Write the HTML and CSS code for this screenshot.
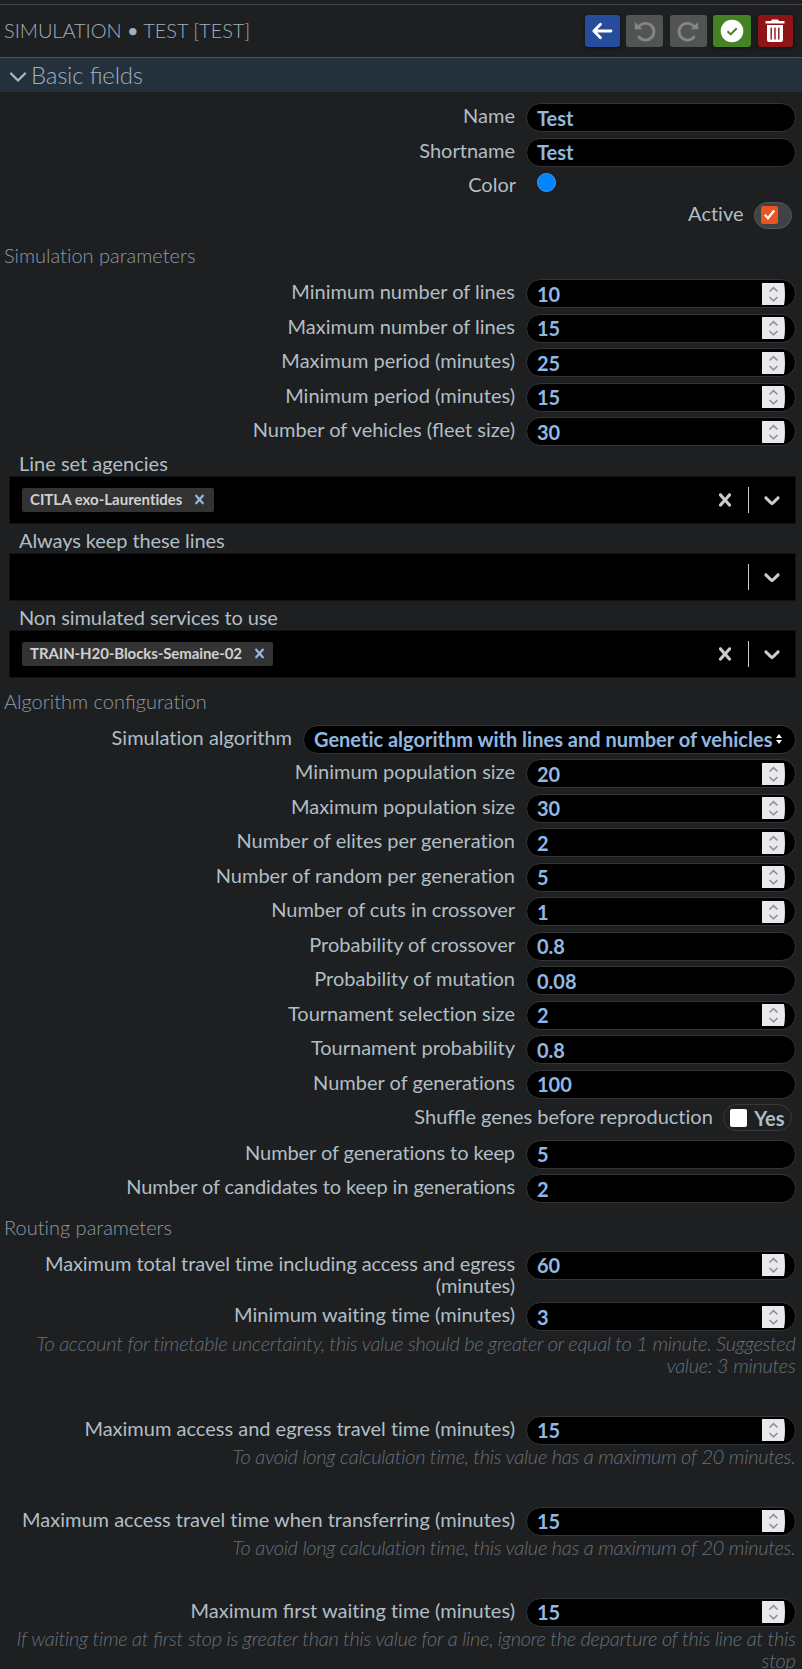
FILE: index.html
```html
<!DOCTYPE html>
<html lang="en">
<head>
<meta charset="utf-8">
<title>Simulation</title>
<link rel="stylesheet" href="styles.css">
</head>
<body>
<svg class="defs" width="0" height="0">
  <symbol id="spin" viewBox="0 0 23 22"><path class="spin-bg" d="M0 0H22Q23 5 23 11T22 22H0Z"/><path class="spin-arrow" d="M7.5 8.5 11.5 4.7 15.5 8.5M7.5 14 11.5 17.8 15.5 14"/></symbol>
  <symbol id="down" viewBox="0 0 20 20"><path d="M4.516 7.548c0.436-0.446 1.043-0.481 1.576 0l3.908 3.747 3.908-3.747c0.533-0.481 1.141-0.446 1.574 0 0.436 0.445 0.408 1.197 0 1.615-0.406 0.418-4.695 4.502-4.695 4.502-0.217 0.223-0.502 0.335-0.787 0.335s-0.57-0.112-0.789-0.335c0 0-4.287-4.084-4.695-4.502s-0.436-1.17 0-1.615z"/></symbol>
  <symbol id="cross" viewBox="0 0 20 20"><path d="M14.348 14.849c-0.469 0.469-1.229 0.469-1.697 0l-2.651-3.030-2.651 3.029c-0.469 0.469-1.229 0.469-1.697 0-0.469-0.469-0.469-1.229 0-1.697l2.758-3.15-2.759-3.152c-0.469-0.469-0.469-1.228 0-1.697s1.228-0.469 1.697 0l2.652 3.031 2.651-3.031c0.469-0.469 1.228-0.469 1.697 0s0.469 1.229 0 1.697l-2.758 3.152 2.758 3.15c0.469 0.469 0.469 1.229 0 1.698z"/></symbol>
</svg>
<header class="header">
  <h1 class="title">SIMULATION <span class="bullet">•</span> TEST [TEST]</h1>
  <div class="actions">
    <button class="btn back"><svg width="22" height="22" viewBox="0 0 22 22"><path class="line" d="M20 11H3M9.5 4.2 2.8 11l6.7 6.8"/></svg></button>
    <button class="btn off undo"><svg width="22" height="22" viewBox="0 0 22 22"><path class="line" d="M4.2 7.6A8.4 8.4 0 1 1 5 17"/><path d="M.8 2v7.2h7.6z"/></svg></button>
    <button class="btn off redo"><svg width="22" height="22" viewBox="0 0 22 22"><path class="line" d="M17.8 7.6A8.4 8.4 0 1 0 17 17"/><path d="M21.2 2v7.2h-7.6z"/></svg></button>
    <button class="btn save"><svg width="24" height="24" viewBox="0 0 24 24"><circle cx="12" cy="12" r="11.3"/><path class="tick" d="M7.5 12.2l3.2 3.2 6-6.2"/></svg></button>
    <button class="btn del"><svg width="20" height="24" viewBox="0 0 20 24"><path d="M6 2 7 .5h6L14 2h5.5v2.5H.5V2zM2 6h16v15a2 2 0 0 1-2 2H4a2 2 0 0 1-2-2z"/><path class="slots" d="M6.2 8.5v12M10 8.5v12M13.8 8.5v12"/></svg></button>
  </div>
</header>
<h2 class="section"><svg width="18" height="12" viewBox="0 0 18 12"><path d="M2 2.5 9 9.5l7-7"/></svg>Basic fields</h2>
<main class="form">
  <div class="row"><label>Name</label><div class="field">Test</div></div>
  <div class="row"><label>Shortname</label><div class="field">Test</div></div>
  <div class="row color-row"><label>Color</label><div class="color-cell"><span class="dot"></span></div></div>
  <div class="row active-row"><label>Active</label><div class="pill on"><span class="box"><svg width="17" height="17" viewBox="0 0 17 17"><path d="M3.8 8.8l3.2 3.4 6.2-7.6"/></svg></span></div></div>

  <h3 class="h-sim">Simulation parameters</h3>
  <div class="row"><label>Minimum number of lines</label><div class="field">10<svg class="spin"><use href="#spin"/></svg></div></div>
  <div class="row"><label>Maximum number of lines</label><div class="field">15<svg class="spin"><use href="#spin"/></svg></div></div>
  <div class="row"><label>Maximum period (minutes)</label><div class="field">25<svg class="spin"><use href="#spin"/></svg></div></div>
  <div class="row"><label>Minimum period (minutes)</label><div class="field">15<svg class="spin"><use href="#spin"/></svg></div></div>
  <div class="row"><label>Number of vehicles (<span class="lig">fl</span>eet size)</label><div class="field">30<svg class="spin"><use href="#spin"/></svg></div></div>

  <div class="multi"><label>Line set agencies</label>
    <div class="select"><span class="tag">CITLA exo-Laurentides<svg width="19" height="19"><use href="#cross"/></svg></span><svg class="clear" width="26" height="26"><use href="#cross"/></svg><span class="bar"></span><svg class="open" width="26" height="26"><use href="#down"/></svg></div></div>
  <div class="multi"><label class="tight">Always keep these lines</label>
    <div class="select"><span class="bar"></span><svg class="open" width="26" height="26"><use href="#down"/></svg></div></div>
  <div class="multi"><label class="tight">Non simulated services to use</label>
    <div class="select"><span class="tag tight">TRAIN-H20-Blocks-Semaine-02<svg width="19" height="19"><use href="#cross"/></svg></span><svg class="clear" width="26" height="26"><use href="#cross"/></svg><span class="bar"></span><svg class="open" width="26" height="26"><use href="#down"/></svg></div></div>

  <h3 class="h-algo">Algorithm con<span class="lig">fi</span>guration</h3>
  <div class="row"><label>Simulation algorithm</label><div class="field wide">Genetic algorithm with lines and number of vehicles<svg class="sort" width="6" height="10" viewBox="0 0 6 10"><path d="M0 4 3 0l3 4zM0 6h6L3 10z"/></svg></div></div>
  <div class="row"><label>Minimum population size</label><div class="field">20<svg class="spin"><use href="#spin"/></svg></div></div>
  <div class="row"><label>Maximum population size</label><div class="field">30<svg class="spin"><use href="#spin"/></svg></div></div>
  <div class="row"><label>Number of elites per generation</label><div class="field">2<svg class="spin"><use href="#spin"/></svg></div></div>
  <div class="row"><label>Number of random per generation</label><div class="field">5<svg class="spin"><use href="#spin"/></svg></div></div>
  <div class="row"><label class="tight">Number of cuts in crossover</label><div class="field">1<svg class="spin"><use href="#spin"/></svg></div></div>
  <div class="row"><label>Probability of crossover</label><div class="field">0.8</div></div>
  <div class="row"><label>Probability of mutation</label><div class="field">0.08</div></div>
  <div class="row"><label>Tournament selection size</label><div class="field">2<svg class="spin"><use href="#spin"/></svg></div></div>
  <div class="row"><label>Tournament probability</label><div class="field">0.8</div></div>
  <div class="row"><label>Number of generations</label><div class="field">100</div></div>
  <div class="row shuffle-row"><label>Shu<span class="lig">ffl</span>e genes before reproduction</label><div class="pill"><span class="box"></span>Yes</div></div>
  <div class="row"><label class="tight">Number of generations to keep</label><div class="field">5</div></div>
  <div class="row"><label class="tight">Number of candidates to keep in generations</label><div class="field">2</div></div>

  <h3 class="h-route">Routing parameters</h3>
  <div class="row two-line"><label class="tight">Maximum total travel time including access and egress (minutes)</label><div class="field">60<svg class="spin"><use href="#spin"/></svg></div></div>
  <div class="row"><label>Minimum waiting time (minutes)</label><div class="field">3<svg class="spin"><use href="#spin"/></svg></div></div>
  <p class="hint">To account for timetable uncertainty, this value should be greater or equal to 1 minute. Suggested value: 3 minutes</p>
  <div class="row"><label>Maximum access and egress travel time (minutes)</label><div class="field">15<svg class="spin"><use href="#spin"/></svg></div></div>
  <p class="hint">To avoid long calculation time, this value has a maximum of 20 minutes.</p>
  <div class="row"><label>Maximum access travel time when transferring (minutes)</label><div class="field">15<svg class="spin"><use href="#spin"/></svg></div></div>
  <p class="hint">To avoid long calculation time, this value has a maximum of 20 minutes.</p>
  <div class="row"><label>Maximum <span class="lig">fi</span>rst waiting time (minutes)</label><div class="field">15<svg class="spin"><use href="#spin"/></svg></div></div>
  <p class="hint">If waiting time at <span class="lig">fi</span>rst stop is greater than this value for a line, ignore the departure of this line at this stop</p>
</main>
</body>
</html>
```
FILE: styles.css
```css
* { box-sizing: border-box; }
html { background: #1e1f21; }
body {
  margin: 0;
  padding-top: 4px;
  height: 1669px;
  overflow: hidden;
  background: #1e1f21;
  color: #b0bec5;
  font: 400 20px/22px Lato, sans-serif;
  font-feature-settings: "liga" 0;
}
.defs { position: absolute; }
.lig { font-feature-settings: "liga" 1; }
h1, h2, h3, p { margin: 0; }

.header {
  display: flex;
  align-items: center;
  justify-content: space-between;
  height: 54px;
  padding: 0 9.5px 0 4px;
  border-top: 1px solid #444547;
  border-bottom: 1px solid #505153;
}
.title { padding-bottom: 2px; font-size: 20px; font-weight: 300; letter-spacing: -.06px; color: #9db1bf; }
.bullet { font-weight: 400; }
.actions { display: flex; gap: 6.4px; }
.btn {
  display: flex;
  align-items: center;
  justify-content: center;
  width: 35px;
  height: 32px;
  padding: 0;
  border: 0;
  border-radius: 3px;
  box-shadow: 0 1px 4px rgba(0, 0, 0, .5);
}
.btn svg { fill: #fff; }
.btn .line { fill: none; stroke: #fff; stroke-width: 2.8; stroke-linecap: round; stroke-linejoin: round; }
.back { background: #264c9c; }
.off { width: 37px; background: #525454; box-shadow: none; }
.off svg { fill: #858686; }
.off .line { stroke: #858686; }
.save { width: 38px; background: #448224; }
.save .tick { fill: none; stroke: #448224; stroke-width: 2; }
.del { background: #8f1418; }
.btn .slots { stroke: #8f1418; stroke-width: 1.4; }

.section {
  display: flex;
  align-items: center;
  gap: 4px;
  height: 34px;
  padding-left: 9px;
  background: #24303b;
  color: #9db1bf;
  font-size: 24px;
  font-weight: 300;
  letter-spacing: -.22px;
  font-feature-settings: "liga" 1;
}
.section svg { margin-top: 4px; fill: none; stroke: #a6bccb; stroke-width: 2.2; stroke-linecap: round; }

.form { padding: 11px 6.5px 0 4px; }
.row {
  display: flex;
  justify-content: flex-end;
  align-items: flex-start;
  gap: 11px;
  height: 34.5px;
}
.row label { padding-top: 1px; text-align: right; }
.tight { letter-spacing: -.09px; }
.field {
  display: flex;
  align-items: center;
  justify-content: space-between;
  flex: none;
  width: 269.5px;
  height: 29px;
  padding: 0 10px;
  border: 1px solid #343536;
  border-radius: 15px;
  background: #000;
  color: #90b8e0;
  font-weight: 700;
}
.wide { width: 492.5px; padding-right: 13px; }
.spin { width: 23px; height: 22px; }
.spin-bg { fill: #e9e8ed; }
.spin-arrow { fill: none; stroke: #92919f; stroke-width: 1.7; }
.sort { fill: #fff; }

.color-row { height: 29.5px; }
.color-cell { width: 269.5px; padding: 1px 0 0 11px; }
.color-row label { margin-right: -1px; }
.dot { display: block; width: 19px; height: 19px; border: 1px solid #3d9cf8; border-radius: 50%; background: #0085ff; }
.active-row, .shuffle-row { padding-right: 4px; gap: 10px; }
.active-row { height: 34.5px; }
.active-row label { padding-top: 0; }
.pill {
  display: flex;
  align-items: center;
  gap: 7px;
  height: 27px;
  padding: 0 6px;
  border: 1px solid #38393b;
  border-radius: 14px;
  font-weight: 700;
}
.pill.on { width: 38px; background: #414244; border-color: #55565a; }
.box { width: 17.5px; height: 17.5px; border-radius: 2px; background: #fff; }
.on .box { background: #e95420; }
.box svg { display: block; fill: none; stroke: #fff; stroke-width: 2.4; }

h3 { color: #8c9ba6; font-size: 20px; font-weight: 300; line-height: 22px; }
.h-sim { height: 35px; margin-top: 8px; }
.h-algo { height: 34.9px; margin-top: 7.4px; }
.h-route { height: 35px; margin-top: 7px; }

.multi { height: 77px; padding-left: 5px; }
.multi label { display: block; height: 24px; padding-left: 10px; }
.select {
  display: flex;
  align-items: center;
  height: 48px;
  padding: 0 9.5px 0 12px;
  border: 1px solid #111213;
  background: #000;
}
.tag {
  display: flex;
  align-items: center;
  gap: 8px;
  height: 24px;
  padding: 0 4.5px 1px 8px;
  border-radius: 2px;
  background: #333;
  color: #d0d0d0;
  font-size: 15px;
  font-weight: 700;
}
.tag svg { fill: #90b8e0; }
.select .clear { margin-left: auto; fill: #ccc; }
.bar { width: 1px; height: 26px; margin: 0 10px; background: #ccc; }
.bar:first-child { margin-left: auto; }
.open { fill: #ccc; }

.shuffle-row { height: 35.5px; }
.two-line { height: 51.6px; }
.two-line label { width: 500px; }
.hint {
  margin: -5.3px 0 40px;
  color: #66717a;
  font-style: italic;
  font-weight: 300;
  letter-spacing: -.28px;
  text-align: right;
}
```
